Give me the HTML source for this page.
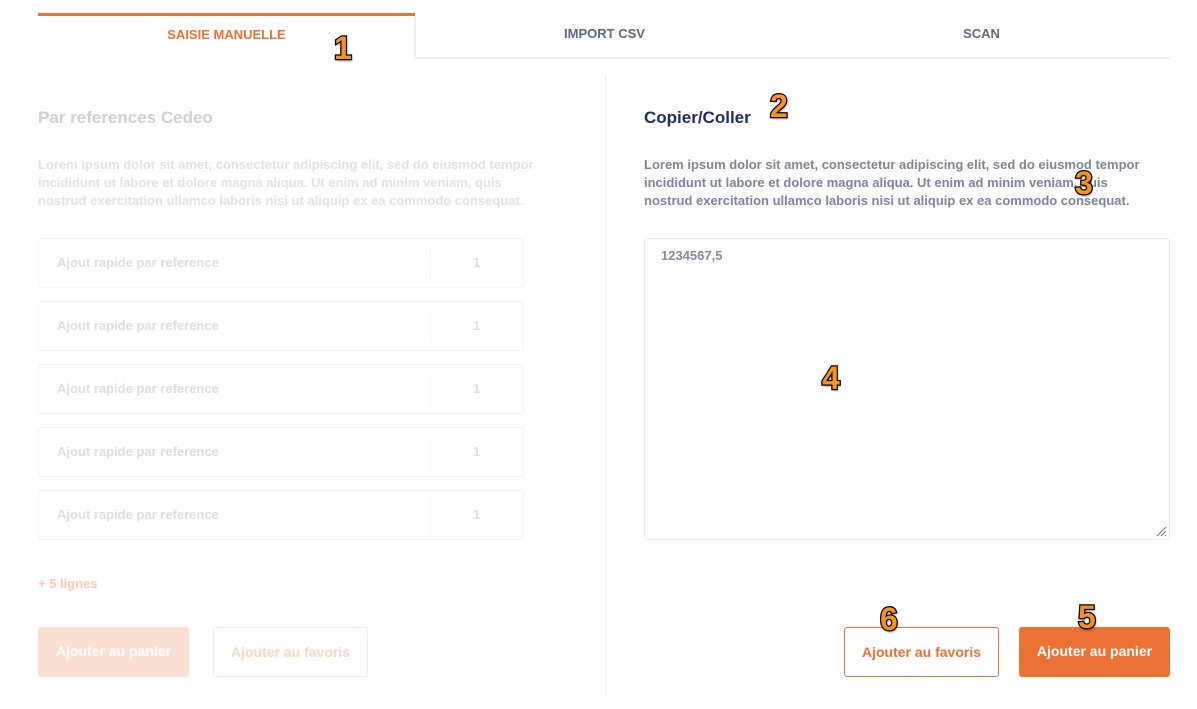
<!DOCTYPE html>
<html><head><meta charset="utf-8"><style>
*{box-sizing:border-box;margin:0;padding:0}
body{width:1197px;height:709px;background:#fff;font-family:"Liberation Sans",sans-serif;position:relative;overflow:hidden}
.a{position:absolute}
.tab{position:absolute;top:13px;height:46px;font-size:13px;font-weight:bold;text-align:center;line-height:42px}
.badge{position:absolute;font-size:32px;font-weight:900;color:#f7931e;-webkit-text-stroke:2.5px #000;paint-order:stroke fill;text-shadow:1px 2px 2px rgba(0,0,0,.4);font-family:"Liberation Sans",sans-serif}
.p{font-size:13px;line-height:18px;font-weight:bold}
.inp{position:absolute;left:38px;width:486px;height:50px;border:1px solid #f3f3f6;border-radius:3px;font-size:13px;color:#dcdee5;font-weight:bold}
.inp span{position:absolute;left:18px;top:16px}
.inp i{position:absolute;left:391px;top:10px;width:1px;height:30px;background:#f3f3f6}
.inp b{position:absolute;left:434px;top:16px}
.btn{position:absolute;height:50px;border-radius:3px;font-size:14px;font-weight:bold;text-align:center;line-height:48px}
</style></head><body>
<div class="tab" style="left:38px;width:377px;border-top:3px solid #ec7135;color:#ec7135;line-height:38px">SAISIE MANUELLE</div>
<div class="a" style="left:414px;top:16px;width:2px;height:43px;background:#efeff2"></div>
<div class="a" style="left:414px;top:57px;width:756px;height:2px;background:#efeff2"></div>
<div class="tab" style="left:416px;width:377px;color:#5c6685;top:16px;line-height:36px">IMPORT CSV</div>
<div class="tab" style="left:793px;width:377px;color:#5c6685;top:16px;line-height:36px">SCAN</div>
<div class="badge" style="left:334px;top:30px">1</div>
<div class="a" style="left:605px;top:75px;width:1px;height:622px;background:#eeeef1"></div>

<div class="a" style="left:38px;top:108px;font-size:17px;font-weight:bold;color:#ccd0dc">Par references Cedeo</div>
<div class="a p" style="left:38px;top:156px;width:505px;color:#e0e2e8">Lorem ipsum dolor sit amet, consectetur adipiscing elit, sed do eiusmod tempor incididunt ut labore et dolore magna aliqua. Ut enim ad minim veniam, quis nostrud exercitation ullamco laboris nisi ut aliquip ex ea commodo consequat.</div>
<div class="inp" style="top:238px"><span>Ajout rapide par reference</span><i></i><b>1</b></div>
<div class="inp" style="top:301px"><span>Ajout rapide par reference</span><i></i><b>1</b></div>
<div class="inp" style="top:364px"><span>Ajout rapide par reference</span><i></i><b>1</b></div>
<div class="inp" style="top:427px"><span>Ajout rapide par reference</span><i></i><b>1</b></div>
<div class="inp" style="top:490px"><span>Ajout rapide par reference</span><i></i><b>1</b></div>
<div class="a" style="left:38px;top:576px;font-size:13px;font-weight:bold;color:#f9c9b0">+ 5 lignes</div>
<div class="btn" style="left:38px;top:627px;width:151px;background:#fbe1d4;color:#fff">Ajouter au panier</div>
<div class="btn" style="left:213px;top:627px;width:155px;border:1px solid #fde6da;color:#fbd6c2">Ajouter au favoris</div>

<div class="a" style="left:644px;top:108px;font-size:17px;font-weight:bold;color:#1f2d5a">Copier/Coller</div>
<div class="badge" style="left:770px;top:88px">2</div>
<div class="a p" style="left:644px;top:156px;width:505px;color:#7d849b">Lorem ipsum dolor sit amet, consectetur adipiscing elit, sed do eiusmod tempor incididunt ut labore et dolore magna aliqua. Ut enim ad minim veniam, quis nostrud exercitation ullamco laboris nisi ut aliquip ex ea commodo consequat.</div>
<div class="badge" style="left:1075px;top:165px">3</div>
<div class="a" style="left:644px;top:238px;width:526px;height:302px;border:1px solid #ececf0;border-radius:3px">
<div class="a" style="left:16px;top:9px;font-size:13px;font-weight:bold;color:#858ba0">1234567,5</div>
<svg class="a" style="right:2px;bottom:2px" width="12" height="12"><path d="M11 2L2 11M11 6L6 11M11 10L10 11" stroke="#777" stroke-width="1"/></svg>
</div>
<div class="badge" style="left:822px;top:360px">4</div>
<div class="btn" style="left:844px;top:627px;width:155px;border:1px solid #ec7135;color:#ec7135">Ajouter au favoris</div>
<div class="btn" style="left:1019px;top:627px;width:151px;background:#ec7135;color:#fff">Ajouter au panier</div>
<div class="badge" style="left:880px;top:601px">6</div>
<div class="badge" style="left:1078px;top:599px">5</div>
</body></html>
